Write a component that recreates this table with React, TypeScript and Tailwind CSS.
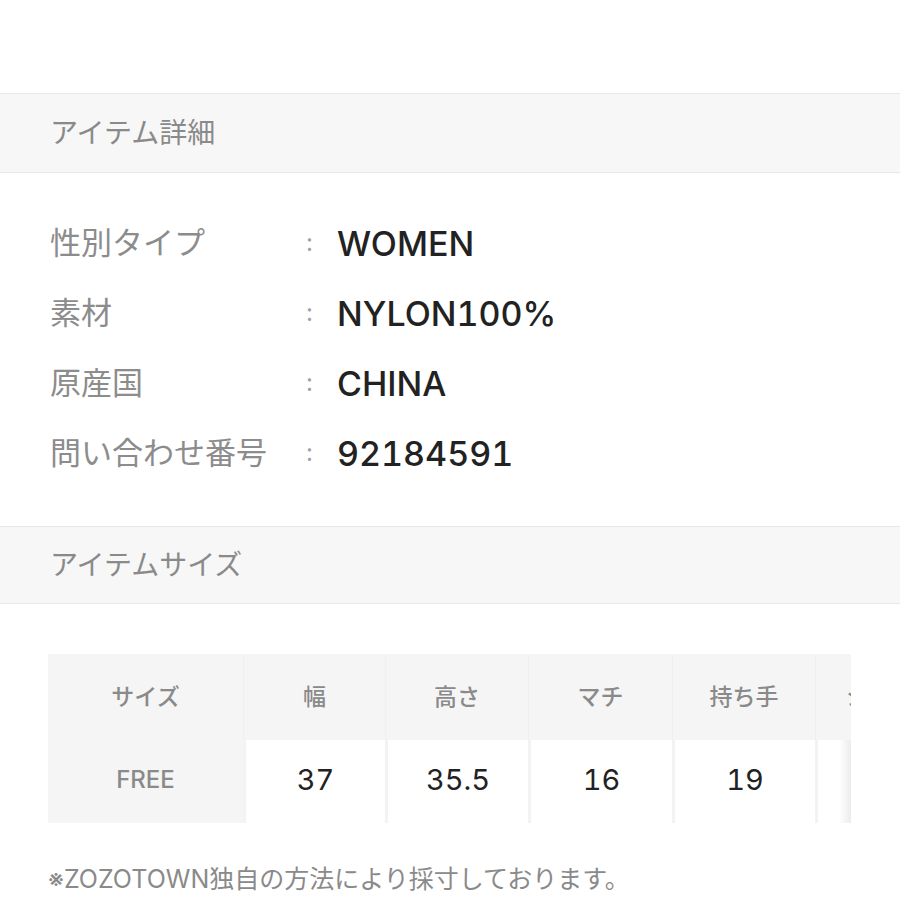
import React from "react";

interface DetailRow {
  label: string;
  value: string;
}

const details: DetailRow[] = [
  { label: "性別タイプ", value: "WOMEN" },
  { label: "素材", value: "NYLON100%" },
  { label: "原産国", value: "CHINA" },
  { label: "問い合わせ番号", value: "92184591" },
];

const sizeHeaders = ["サイズ", "幅", "高さ", "マチ", "持ち手", "ショルダー"];
const sizeValues = ["37", "35.5", "16", "19", ""];

const font = {
  fontFamily: 'Inter, "Noto Sans CJK JP", sans-serif',
};

const SectionTitle: React.FC<{ title: string; height: string }> = ({ title, height }) => (
  <div
    className={`${height} flex items-center border-y border-[#e8e8e8] bg-[#f7f7f7] pl-[50px] text-[28px] text-[#8a8a8a]`}
  >
    {title}
  </div>
);

const App: React.FC = () => {
  return (
    <div className="w-[900px] h-[900px] overflow-hidden bg-white" style={font}>
      <div className="h-[93px]" />

      {/* Item details */}
      <SectionTitle title="アイテム詳細" height="h-[80px]" />
      <div className="pt-[35px] pb-[38px] pl-[50px]">
        {details.map((row) => (
          <div key={row.label} className="flex h-[70px] items-center">
            <span className="w-[256px] text-[31px] text-[#8c8c8c]">{row.label}</span>
            <span className="w-[31px] text-[24px] text-[#a0a0a0]">:</span>
            <span className="text-[34px] font-medium tabular-nums text-[#222]">{row.value}</span>
          </div>
        ))}
      </div>

      {/* Item size */}
      <SectionTitle title="アイテムサイズ" height="h-[78px]" />
      <div className="relative mt-[50px] ml-[48px] w-[803px] overflow-hidden bg-[#f5f5f5]">
        <div className="grid w-max grid-cols-[195px_142px_143px_144px_143px_176px]">
          {sizeHeaders.map((h) => (
            <div
              key={h}
              className="flex h-[86px] items-center justify-center border-l border-[#f0f0f0] text-[23px] font-medium text-[#8a8a8a] first:border-l-0"
            >
              {h}
            </div>
          ))}
          <div className="flex h-[83px] items-center justify-center pb-[3px] text-[24px] font-medium text-[#8a8a8a]">
            FREE
          </div>
          {sizeValues.map((v, i) => (
            <div
              key={i}
              className="flex h-[83px] items-center justify-center border-l-[3px] border-[#f3f3f3] bg-white pb-[3px] text-[29px] tabular-nums text-[#222]"
            >
              {v}
            </div>
          ))}
        </div>
        <div className="absolute right-0 top-[86px] bottom-0 w-[12px] bg-gradient-to-l from-[#ececec] to-transparent" />
      </div>

      <p className="mt-[40px] ml-[48px] text-[25px] leading-[32px] text-[#8a8a8a]">
        ※ZOZOTOWN独自の方法により採寸しております。
      </p>
    </div>
  );
};

export default App;
